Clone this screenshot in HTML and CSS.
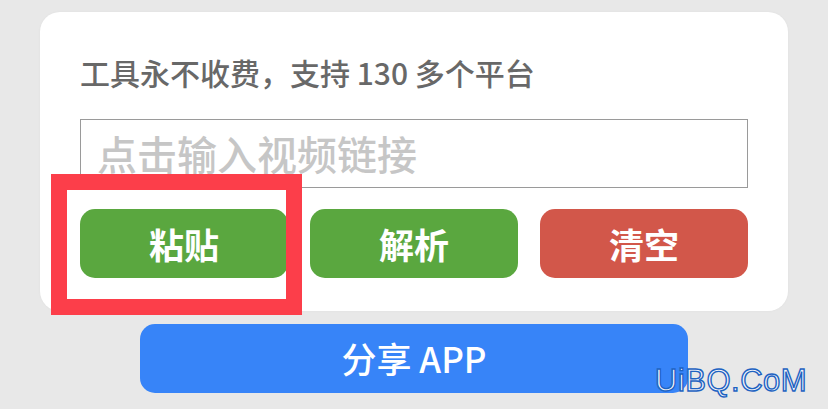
FILE: index.html
```html
<!DOCTYPE html>
<html lang="zh-CN">
<head>
<meta charset="utf-8">
<title>视频解析</title>
<link rel="stylesheet" href="styles.css">
</head>
<body>
<main class="page">
  <section class="card">
    <h1 class="title">工具永不收费，支持 130 多个平台</h1>
    <div class="input-box"><input class="link-input" type="text" placeholder="点击输入视频链接"></div>
    <div class="actions">
      <button class="btn btn-green">粘贴</button>
      <button class="btn btn-green">解析</button>
      <button class="btn btn-red">清空</button>
    </div>
    <div class="highlight"></div>
  </section>
  <button class="share">分享 APP</button>
  <div class="watermark">UiBQ.CoM</div>
</main>
</body>
</html>
```
FILE: styles.css
```css
* { box-sizing: border-box; }
html, body {
  margin: 0;
  padding: 0;
  width: 828px;
  height: 409px;
  overflow: hidden;
  background: #e8e8e8;
  font-family: "Noto Sans CJK SC", "Noto Sans", sans-serif;
}
.page {
  position: relative;
  padding-top: 12px;
  height: 409px;
}
.card {
  position: relative;
  margin-left: 40px;
  width: 748px;
  height: 299px;
  background: #ffffff;
  border-radius: 20px;
  padding: 40px 40px 0 40px;
  box-shadow: 0 0 3px rgba(0,0,0,0.04);
}
.title {
  margin: 0;
  height: 41px;
  line-height: 41px;
  font-size: 30px;
  font-weight: 500;
  color: #686868;
  white-space: nowrap;
}
.input-box {
  margin-top: 26px;
  height: 69px;
  border: 1px solid #9a9a9a;
}
.link-input {
  display: block;
  width: 100%;
  height: 100%;
  border: 0;
  outline: none;
  background: transparent;
  padding: 0 0 2px 16px;
  font-family: "Noto Sans CJK SC", sans-serif;
  font-size: 40px;
  font-weight: 500;
  color: #333;
}
.link-input::placeholder { color: #c6c6c6; }
.actions {
  display: grid;
  grid-template-columns: repeat(3, 1fr);
  column-gap: 22px;
  margin-top: 21px;
}
.btn {
  height: 69px;
  border: 0;
  border-radius: 15px;
  color: #ffffff;
  font-family: "Noto Sans CJK SC", sans-serif;
  font-size: 35px;
  font-weight: 700;
  padding: 0;
}
.btn-green { background: #5aa73f; }
.btn-red { background: #d2574a; }
.highlight {
  position: absolute;
  left: 11px;
  top: 162px;
  width: 251px;
  height: 141px;
  border: 16px solid #fc3e4a;
}
.share {
  display: block;
  margin: 13px 0 0 140px;
  width: 548px;
  height: 69px;
  border: 0;
  border-radius: 15px;
  background: #3784f8;
  color: #ffffff;
  font-family: "Noto Sans CJK SC", sans-serif;
  font-size: 35px;
  font-weight: 500;
  padding: 0 0 2px 0;
}
.watermark {
  position: absolute;
  left: 655px;
  top: 363px;
  font-family: "Liberation Sans", sans-serif;
  font-size: 31px;
  line-height: 36px;
  color: #f4f6fa;
  -webkit-text-stroke: 1.4px #1e63c2;
  letter-spacing: 0.5px;
}
```
